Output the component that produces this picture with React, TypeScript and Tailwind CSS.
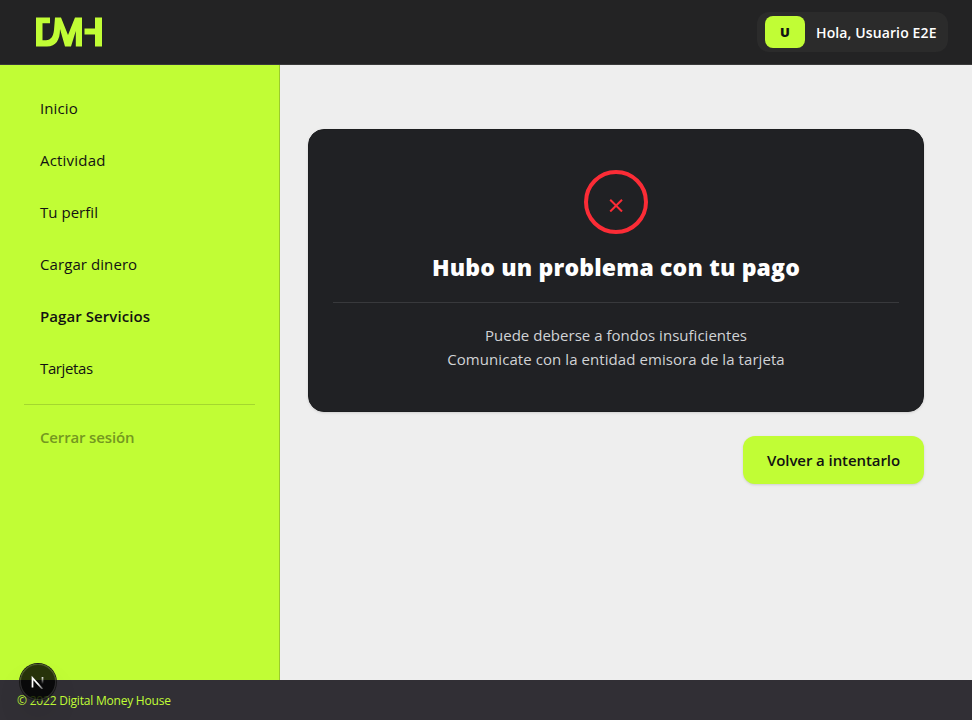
const links = [
  { label: "Inicio", tone: "tracking-[0.1px]" },
  { label: "Actividad", tone: "tracking-[0.2px]" },
  { label: "Tu perfil", tone: "tracking-[0.03px]" },
  { label: "Cargar dinero", tone: "tracking-[0.08px]" },
  { label: "Pagar Servicios", tone: "font-semibold tracking-[0.07px]" },
  { label: "Tarjetas", tone: "tracking-[-0.38px]" },
];

function Logo() {
  return (
    <svg width="66" height="30" viewBox="0 0 66 30" fill="#c1fd35" aria-label="DMH">
      <path d="M0 0.500H14V6.300H6.500V23.300H10C15 23.300 17.300 19 18 13L19 0.500H25L32 18L39 0.500H46V29.500H39.800V14L35 29.500H29L24 12C24 23 20 29.500 11 29.500H0Z" />
      <path d="M48.500 11.500H59V0.500H66V29.500H59V17.500H48.500Z" />
    </svg>
  );
}

export default function App() {
  return (
    <div className="relative flex h-[720px] w-[972px] flex-col overflow-hidden bg-[#eeeeee] font-['Open_Sans','Noto_Sans',sans-serif] text-[15px] leading-6 text-[#121212]">
      <header className="flex h-[65px] shrink-0 items-center justify-between border-b border-[#3a3a3a] bg-[#232324] pl-9 pr-6">
        <Logo />
        <div className="flex h-10 w-[191px] items-center gap-[11px] rounded-xl bg-[#2b2b2b] pl-2">
          <span className="flex h-8 w-10 items-center justify-center rounded-lg bg-[#c1fd35] text-[13px] font-extrabold">U</span>
          <span className="whitespace-nowrap pt-0.5 text-[14px] font-semibold tracking-[0.12px] text-white">Hola, Usuario E2E</span>
        </div>
      </header>
      <div className="flex min-h-0 flex-1">
        <aside className="w-[280px] shrink-0 border-r border-[#9bcb2c] bg-[#c1fd35] px-6 pt-[23px]">
          <nav className="flex flex-col gap-3">
            {links.map((l) => (
              <a key={l.label} className="flex h-10 items-center px-4">
                <span className={l.tone}>{l.label}</span>
              </a>
            ))}
          </nav>
          <div className="mt-4 border-t border-[#a4d72f] pt-3">
            <a className="flex h-10 items-center px-4 font-semibold tracking-[-0.15px] text-[#749820]">Cerrar sesión</a>
          </div>
        </aside>
        <main className="flex flex-1 flex-col items-end pl-7 pr-12 pt-16">
          <section className="flex h-[283px] w-full flex-col items-center rounded-2xl border border-[#1c1d1f] bg-[#202124] px-6 pt-10 text-center shadow-sm">
            <div className="flex size-16 items-center justify-center rounded-full border-4 border-[#fb2c36] text-[#fb2c36]">
              <svg width="14" height="14" viewBox="0 0 14 14" className="mt-[6px]" stroke="currentColor" strokeWidth="2">
                <path d="M1.200 1.700L13 13.500M13 1.700L1.200 13.500" />
              </svg>
            </div>
            <h1 className="mt-[15px] text-[23px] font-extrabold leading-9 tracking-[0.17px] text-white">Hubo un problema con tu pago</h1>
            <div className="mt-[17px] w-full border-t border-[#38393c] pt-5 text-[#d1d3d6]">
              <p className="tracking-[0.02px]">Puede deberse a fondos insuficientes</p>
              <p className="tracking-[0.07px]">Comunicate con la entidad emisora de la tarjeta</p>
            </div>
          </section>
          <button className="mt-6 h-12 w-[181px] rounded-xl bg-[#c1fd35] font-semibold tracking-[-0.08px] shadow-sm">Volver a intentarlo</button>
        </main>
      </div>
      <footer className="flex h-10 shrink-0 items-center bg-[#312f35] pl-[17px] pt-0.5 text-[12px] tracking-[-0.21px] text-[#c1fd35]">© 2022 Digital Money House</footer>
      <div className="absolute left-5 top-[664px] flex size-9 items-center justify-center rounded-full bg-black/80 shadow-[0_0_0_1px_#171717,inset_0_0_0_1px_rgba(255,255,255,0.14),0_16px_32px_-8px_rgba(0,0,0,0.24)]">
        <svg width="14" height="14" viewBox="0 0 14 14" fill="none" strokeWidth="1.700">
          <defs>
            <linearGradient id="diag" x1="8" y1="8" x2="13" y2="14" gradientUnits="userSpaceOnUse"><stop stopColor="#fff" /><stop offset="1" stopColor="#fff" stopOpacity="0.2" /></linearGradient>
            <linearGradient id="stem" x1="11" y1="1" x2="11" y2="9" gradientUnits="userSpaceOnUse"><stop stopColor="#fff" /><stop offset="1" stopColor="#fff" stopOpacity="0" /></linearGradient>
          </defs>
          <path d="M1.500 12.500V3L11.500 14" stroke="url(#diag)" />
          <path d="M11.500 2V10" stroke="url(#stem)" />
        </svg>
      </div>
    </div>
  );
}
